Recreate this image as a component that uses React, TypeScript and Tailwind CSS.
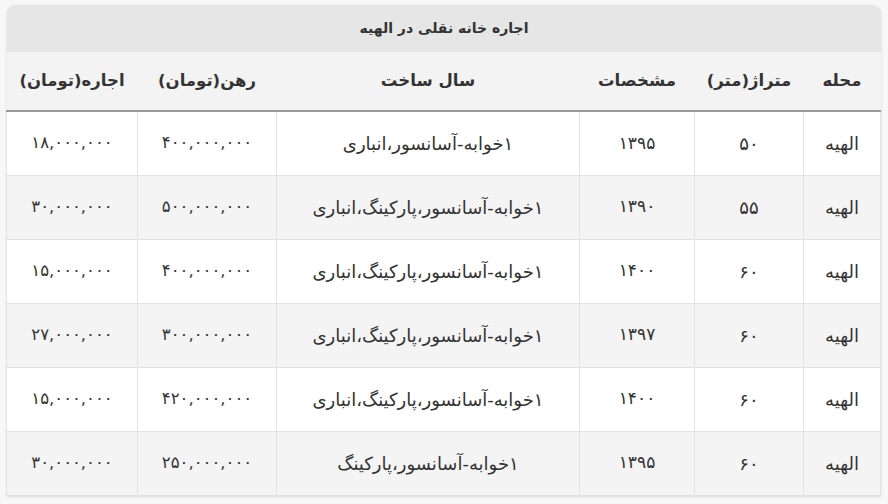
const headers = ['محله', 'متراژ(متر)', 'مشخصات', 'سال ساخت', 'رهن(تومان)', 'اجاره(تومان)'];

const rows = [
  ['الهیه', '۵۰', '۱۳۹۵', '۱خوابه-آسانسور،انباری', '۴۰۰,۰۰۰,۰۰۰', '۱۸,۰۰۰,۰۰۰'],
  ['الهیه', '۵۵', '۱۳۹۰', '۱خوابه-آسانسور،پارکینگ،انباری', '۵۰۰,۰۰۰,۰۰۰', '۳۰,۰۰۰,۰۰۰'],
  ['الهیه', '۶۰', '۱۴۰۰', '۱خوابه-آسانسور،پارکینگ،انباری', '۴۰۰,۰۰۰,۰۰۰', '۱۵,۰۰۰,۰۰۰'],
  ['الهیه', '۶۰', '۱۳۹۷', '۱خوابه-آسانسور،پارکینگ،انباری', '۳۰۰,۰۰۰,۰۰۰', '۲۷,۰۰۰,۰۰۰'],
  ['الهیه', '۶۰', '۱۴۰۰', '۱خوابه-آسانسور،پارکینگ،انباری', '۴۲۰,۰۰۰,۰۰۰', '۱۵,۰۰۰,۰۰۰'],
  ['الهیه', '۶۰', '۱۳۹۵', '۱خوابه-آسانسور،پارکینگ', '۲۵۰,۰۰۰,۰۰۰', '۳۰,۰۰۰,۰۰۰'],
];

const cellSize = ['text-[18px]', 'text-[18px]', 'text-[17px]', 'text-[18px]', 'text-[16.5px]', 'text-[16.5px]'];

const App = () => {
  return (
    <div
      className="min-h-[504px] w-full bg-[#f7f7f7] pt-[5px] pl-[7px] pr-[7px]"
      style={{ fontFamily: '"DejaVu Sans", sans-serif' }}
    >
      <div dir="rtl" className="bg-white shadow-[0_1px_3px_rgba(0,0,0,0.12)] rounded-t-lg">
        {/* Title */}
        <div className="h-[47px] flex items-center justify-center bg-[#e6e6e6] rounded-t-lg text-[14px] font-bold text-[#333]">
          اجاره خانه نقلی در الهیه
        </div>

        <table className="w-full table-fixed border-collapse text-[#333]">
          <colgroup>
            <col className="w-[77px]" />
            <col className="w-[109px]" />
            <col className="w-[115px]" />
            <col className="w-[303px]" />
            <col className="w-[139px]" />
            <col className="w-[131px]" />
          </colgroup>
          <thead>
            <tr className="h-[59px] bg-[#f3f3f3] border-b-2 border-[#9a9a9a]">
              {headers.map((h) => (
                <th key={h} className="text-[16.5px] font-bold text-center whitespace-nowrap px-1">
                  {h}
                </th>
              ))}
            </tr>
          </thead>
          <tbody>
            {rows.map((r, i) => (
              <tr key={i} className={`h-[64px] ${i % 2 === 1 ? 'bg-[#f4f4f4]' : 'bg-white'}`}>
                {r.map((c, j) => (
                  <td
                    key={j}
                    className={`border border-[#e2e2e2] text-center whitespace-nowrap px-1 ${cellSize[j]}`}
                  >
                    {c}
                  </td>
                ))}
              </tr>
            ))}
          </tbody>
        </table>
      </div>
    </div>
  );
};

export default App;
